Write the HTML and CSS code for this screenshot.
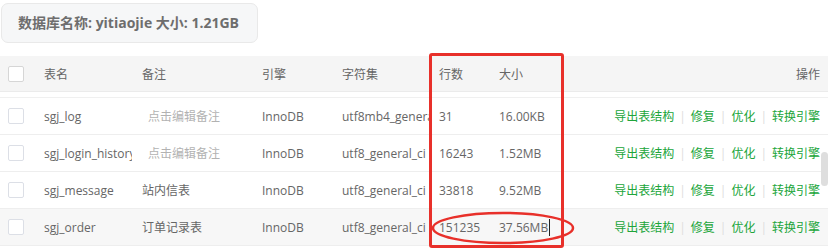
FILE: index.html
```html
<!doctype html>
<html lang="zh-CN">
  <head>
    <meta charset="UTF-8" />
    <title>数据库表</title>
    <link rel="stylesheet" href="styles.css">
  </head>
  <body>
    <div class="page">
      <div class="db-info">数据库名称: yitiaojie 大小: 1.21GB</div>

      <div class="table">
        <div class="row head">
          <div class="cell"><span class="checkbox"></span></div>
          <div class="cell">表名</div>
          <div class="cell">备注</div>
          <div class="cell">引擎</div>
          <div class="cell">字符集</div>
          <div class="cell">行数</div>
          <div class="cell">大小</div>
          <div class="cell ops">操作</div>
        </div>

        <div class="scroll-gap"></div>

        <div class="row">
          <div class="cell"><span class="checkbox"></span></div>
          <div class="cell">sgj_log</div>
          <div class="cell"><span class="placeholder">点击编辑备注</span></div>
          <div class="cell">InnoDB</div>
          <div class="cell">utf8mb4_general_ci</div>
          <div class="cell">31</div>
          <div class="cell">16.00KB</div>
          <div class="cell ops">
            <a>导出表结构</a><i>|</i><a>修复</a><i>|</i><a>优化</a><i>|</i><a>转换引擎</a>
          </div>
        </div>

        <div class="row">
          <div class="cell"><span class="checkbox"></span></div>
          <div class="cell">sgj_login_history</div>
          <div class="cell"><span class="placeholder">点击编辑备注</span></div>
          <div class="cell">InnoDB</div>
          <div class="cell">utf8_general_ci</div>
          <div class="cell">16243</div>
          <div class="cell">1.52MB</div>
          <div class="cell ops">
            <a>导出表结构</a><i>|</i><a>修复</a><i>|</i><a>优化</a><i>|</i><a>转换引擎</a>
          </div>
        </div>

        <div class="row">
          <div class="cell"><span class="checkbox"></span></div>
          <div class="cell">sgj_message</div>
          <div class="cell">站内信表</div>
          <div class="cell">InnoDB</div>
          <div class="cell">utf8_general_ci</div>
          <div class="cell">33818</div>
          <div class="cell">9.52MB</div>
          <div class="cell ops">
            <a>导出表结构</a><i>|</i><a>修复</a><i>|</i><a>优化</a><i>|</i><a>转换引擎</a>
          </div>
        </div>

        <div class="row hover">
          <div class="cell"><span class="checkbox"></span></div>
          <div class="cell">sgj_order</div>
          <div class="cell">订单记录表</div>
          <div class="cell">InnoDB</div>
          <div class="cell">utf8_general_ci</div>
          <div class="cell">151235</div>
          <div class="cell"><span class="caret">37.56MB</span></div>
          <div class="cell ops">
            <a>导出表结构</a><i>|</i><a>修复</a><i>|</i><a>优化</a><i>|</i><a>转换引擎</a>
          </div>
        </div>

        <div class="scrollbar"></div>
      </div>

      <!-- red annotation marks drawn over the table -->
      <div class="mark-box"></div>
      <svg class="mark-ring" viewBox="0 0 144 34" fill="none">
        <ellipse cx="72" cy="17" rx="70" ry="15" stroke="#e8302a" stroke-width="2.5" />
      </svg>
    </div>
  </body>
</html>
```

FILE: styles.css
```css
* {
  margin: 0;
  padding: 0;
  box-sizing: border-box;
}

body {
  background: #fff;
  font-family: "Open Sans", "Noto Sans CJK SC", sans-serif;
  font-size: 12px;
  color: #666;
}

.page {
  position: relative;
  width: 835px;
  height: 251px;
  padding-top: 3px;
  overflow: hidden;
}

.db-info {
  margin-left: 1px;
  width: 257px;
  height: 40px;
  padding-left: 16px;
  line-height: 38px;
  background: #f6f7f8;
  border: 1px solid #e9e9e9;
  border-radius: 7px;
  font-size: 14px;
  font-weight: bold;
  color: #6e6e6e;
  white-space: nowrap;
}

.table {
  position: relative;
  width: 828px;
  margin-top: 13px;
}

.row {
  display: grid;
  grid-template-columns: 34px 98px 120px 80px 97px 60px 1fr auto;
  height: 37px;
  align-items: center;
  border-bottom: 1px solid #eee;
}

.row.head {
  height: 36px;
  background: #f5f5f5;
  border-bottom: 1px solid #ebebeb;
}

.row.hover {
  background: #f7f7f7;
}

.scroll-gap {
  height: 6px;
  border-bottom: 1px solid #f0f0f0;
}

.cell {
  padding-left: 10px;
  white-space: nowrap;
  overflow: hidden;
}

.cell:first-child {
  padding-left: 8px;
  display: flex;
}

.cell:nth-child(2) {
  padding-right: 2px;
}

.cell.ops {
  padding-right: 8px;
  text-align: right;
}

.checkbox {
  display: block;
  width: 16px;
  height: 16px;
  background: #fff;
  border: 1px solid #dcdfe6;
  border-radius: 2px;
}

.head .checkbox {
  border-color: #d6d6d6;
}

.placeholder {
  padding-left: 6px;
  color: #b2b2b2;
}

.caret {
  border-right: 1px solid #222;
  padding-right: 1px;
}

.ops a {
  color: #20a53a;
}

.ops i {
  font-style: normal;
  color: #dddddd;
  margin: 0 5px;
}

.scrollbar {
  position: absolute;
  left: 821px;
  top: 96px;
  width: 7px;
  height: 34px;
  border-radius: 4px;
  background: #dedede;
}

.mark-box {
  position: absolute;
  left: 429px;
  top: 53px;
  width: 135px;
  height: 195px;
  border: 3px solid #e8302a;
  border-radius: 3px;
}

.mark-ring {
  position: absolute;
  left: 431px;
  top: 211px;
  width: 144px;
  height: 34px;
}
```
